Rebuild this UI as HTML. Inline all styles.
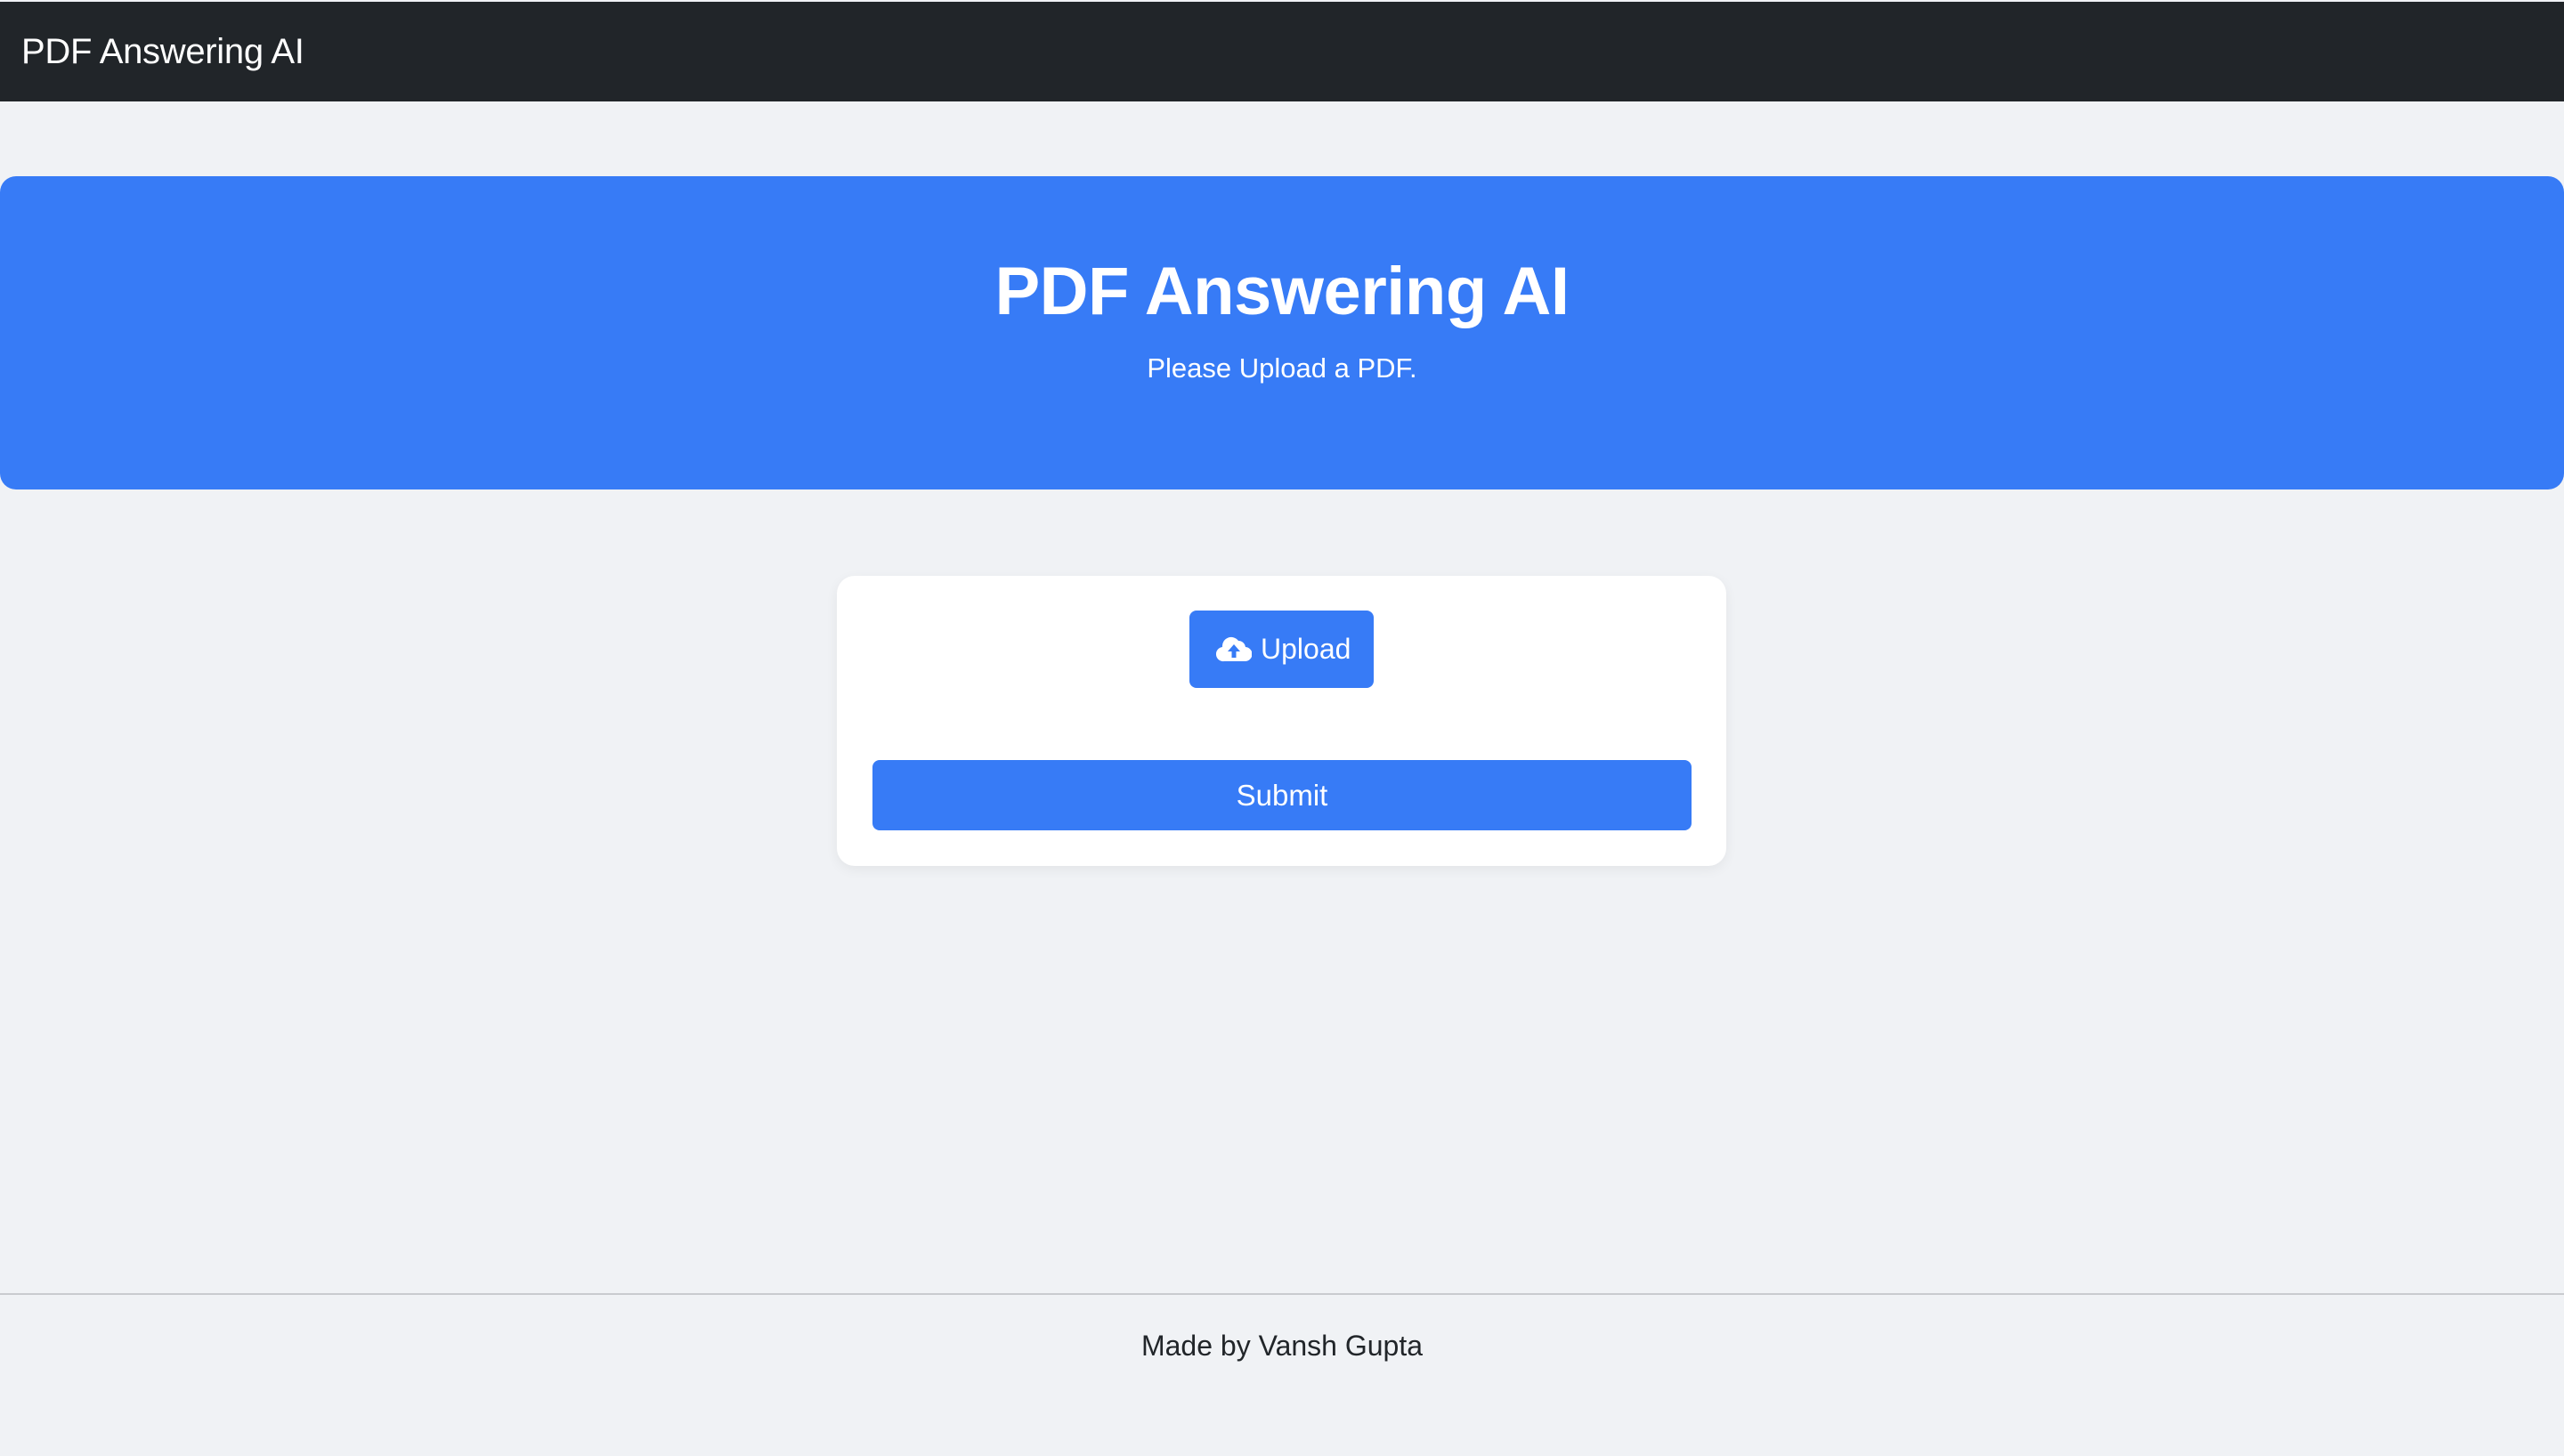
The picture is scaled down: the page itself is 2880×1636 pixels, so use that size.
<!DOCTYPE html>
<html><head><meta charset="utf-8"><style>
*{margin:0;padding:0;box-sizing:border-box}
html,body{width:2880px;height:1636px;overflow:hidden}
body{background:#f0f2f5;font-family:"Liberation Sans",Arial,sans-serif;position:relative;color:#212529}
.nav{position:absolute;left:0;top:2px;width:2880px;height:112px;background:#212529}
.brand{position:absolute;left:24px;top:0;line-height:112px;font-size:40px;color:#fff;letter-spacing:-0.3px}
.hero{position:absolute;left:0;top:198px;width:2880px;height:352px;background:#377bf6;border-radius:18px;color:#fff;text-align:center}
.hero h1{position:absolute;left:0;right:0;top:80px;margin:0;font-size:76px;font-weight:bold;line-height:100px;letter-spacing:-0.5px}
.hero p{position:absolute;left:0;right:0;top:196px;font-size:31px;line-height:40px}
.card{position:absolute;left:940px;top:647px;width:999px;height:326px;background:#fff;border-radius:20px;box-shadow:0 4px 14px rgba(0,0,0,0.06)}
.up{position:absolute;left:396px;top:39px;width:207px;height:87px;background:#377bf6;border-radius:8px;color:#fff;font-size:32px}
.up svg{position:absolute;left:30px;top:28px}
.up span{position:absolute;left:80px;top:0;line-height:87px}
.sub{position:absolute;left:40px;top:207px;width:920px;height:79px;background:#377bf6;border-radius:8px;color:#fff;font-size:33px;text-align:center;line-height:79px}
.line{position:absolute;left:0;top:1453px;width:2880px;height:2px;background:#c9cbcf}
.foot{position:absolute;left:0;width:2880px;top:1492px;text-align:center;font-size:32px;line-height:40px}
</style></head><body>
<div class="nav"><div class="brand">PDF Answering AI</div></div>
<div class="hero"><h1>PDF Answering AI</h1><p>Please Upload a PDF.</p></div>
<div class="card">
<div class="up"><svg width="40" height="30" viewBox="0 0 40 30"><path d="M9 29 A8 8 0 0 1 7 13 A10 10 0 0 1 25 6 A8 8 0 0 1 33 13 A8 8 0 0 1 32 29 Z" fill="#fff"/><path d="M20 10 L13 18 H17.5 V25 H22.5 V18 H27 Z" fill="#377bf6"/></svg><span>Upload</span></div>
<div class="sub">Submit</div>
</div>
<div class="line"></div>
<div class="foot">Made by Vansh Gupta</div>
</body></html>
